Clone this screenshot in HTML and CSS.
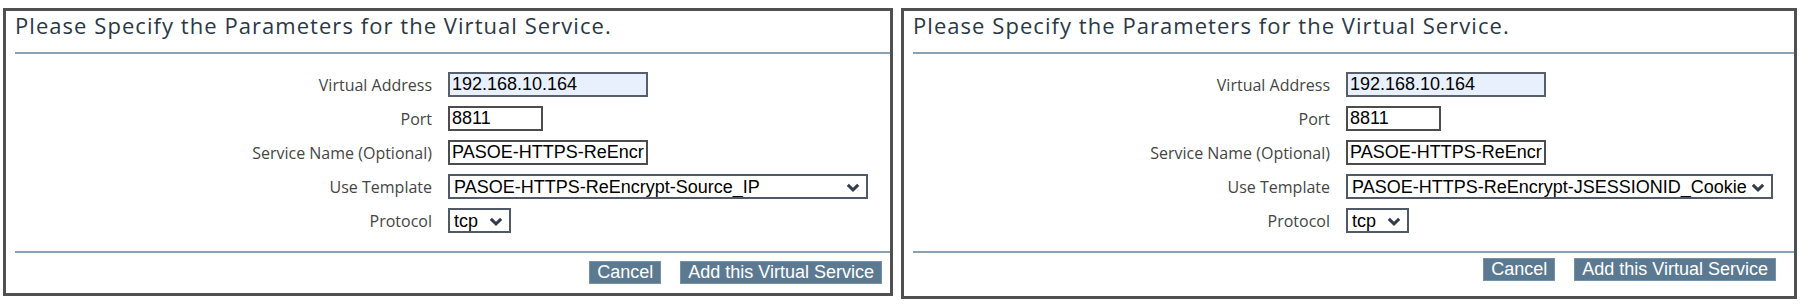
FILE: index.html
```html
<!DOCTYPE html>
<html lang="en">
<head>
    <meta charset="UTF-8">
    <meta name="viewport" content="width=device-width, initial-scale=1.0">
    <title>Add Virtual Service</title>
    <link rel="stylesheet" href="styles.css">
</head>
<body>
    <div class="screens">

        <!-- Screen 1: Source IP template -->
        <section class="panel">
            <h2 class="panel-title">Please Specify the Parameters for the Virtual Service.</h2>
            <form class="vs-form">
                <div class="field-grid">
                    <label for="va-1">Virtual Address</label>
                    <div><input type="text" id="va-1" class="field address autofilled" value="192.168.10.164"></div>

                    <label for="port-1">Port</label>
                    <div><input type="text" id="port-1" class="field port" value="8811"></div>

                    <label for="name-1">Service Name (Optional)</label>
                    <div><input type="text" id="name-1" class="field address" value="PASOE-HTTPS-ReEncrypt"></div>

                    <label for="tpl-1">Use Template</label>
                    <div class="select-box template">
                        <select id="tpl-1">
                            <option>PASOE-HTTPS-ReEncrypt-Source_IP</option>
                            <option>PASOE-HTTPS-ReEncrypt-JSESSIONID_Cookie</option>
                        </select>
                        <svg width="14" height="9" viewBox="0 0 14 9"><polyline points="1.8,1.8 7,6.8 12.2,1.8" fill="none" stroke="currentColor" stroke-width="3"/></svg>
                    </div>

                    <label for="proto-1">Protocol</label>
                    <div class="select-box protocol">
                        <select id="proto-1">
                            <option>tcp</option>
                            <option>udp</option>
                        </select>
                        <svg width="14" height="9" viewBox="0 0 14 9"><polyline points="1.8,1.8 7,6.8 12.2,1.8" fill="none" stroke="currentColor" stroke-width="3"/></svg>
                    </div>
                </div>

                <div class="panel-actions">
                    <button type="button">Cancel</button>
                    <button type="submit">Add this Virtual Service</button>
                </div>
            </form>
        </section>

        <!-- Screen 2: JSESSIONID cookie template -->
        <section class="panel panel-wide">
            <h2 class="panel-title">Please Specify the Parameters for the Virtual Service.</h2>
            <form class="vs-form">
                <div class="field-grid">
                    <label for="va-2">Virtual Address</label>
                    <div><input type="text" id="va-2" class="field address autofilled" value="192.168.10.164"></div>

                    <label for="port-2">Port</label>
                    <div><input type="text" id="port-2" class="field port" value="8811"></div>

                    <label for="name-2">Service Name (Optional)</label>
                    <div><input type="text" id="name-2" class="field address" value="PASOE-HTTPS-ReEncrypt"></div>

                    <label for="tpl-2">Use Template</label>
                    <div class="select-box template template-long">
                        <select id="tpl-2">
                            <option>PASOE-HTTPS-ReEncrypt-JSESSIONID_Cookie</option>
                            <option>PASOE-HTTPS-ReEncrypt-Source_IP</option>
                        </select>
                        <svg width="14" height="9" viewBox="0 0 14 9"><polyline points="1.8,1.8 7,6.8 12.2,1.8" fill="none" stroke="currentColor" stroke-width="3"/></svg>
                    </div>

                    <label for="proto-2">Protocol</label>
                    <div class="select-box protocol">
                        <select id="proto-2">
                            <option>tcp</option>
                            <option>udp</option>
                        </select>
                        <svg width="14" height="9" viewBox="0 0 14 9"><polyline points="1.8,1.8 7,6.8 12.2,1.8" fill="none" stroke="currentColor" stroke-width="3"/></svg>
                    </div>
                </div>

                <div class="panel-actions">
                    <button type="button">Cancel</button>
                    <button type="submit">Add this Virtual Service</button>
                </div>
            </form>
        </section>

    </div>
</body>
</html>
```

FILE: styles.css
```css
/* Two captured "Add Virtual Service" dialogs side by side */
body {
    margin: 0;
    background-color: #ffffff;
    font-family: "Open Sans", "Noto Sans", sans-serif;
    color: #3a3a3a;
}

.screens {
    display: flex;
    align-items: flex-start;
    gap: 8px;
    padding: 8px 0 0 3px;
}

.panel {
    width: 890px;
    box-sizing: border-box;
    border: 3px solid #505050;
    background-color: #ffffff;
}

.panel-wide {
    width: 896px;
}

.panel-title {
    margin: 0 0 0 9px;
    padding: 0 0 13px 0;
    font-size: 22px;
    font-weight: normal;
    letter-spacing: 1.05px;
    line-height: 28px;
    color: #2a3846;
    border-bottom: 2px solid #87a1b5;
}

.vs-form {
    margin: 0;
}

.field-grid {
    display: grid;
    grid-template-columns: 426px auto;
    column-gap: 16px;
    row-gap: 9px;
    align-items: center;
    padding: 18px 0 18px 0;
}

.field-grid label {
    text-align: right;
    font-size: 16px;
    color: #454545;
}

.field-grid > div {
    display: flex;
}

.field {
    box-sizing: border-box;
    height: 25px;
    padding: 0 2px;
    font-family: "Liberation Sans", Arial, sans-serif;
    font-size: 18px;
    color: #000000;
    border: 2px solid #4c4c4c;
    background-color: #ffffff;
    outline: none;
}

.field.address {
    width: 200px;
}

.field.port {
    width: 95px;
}

.field.autofilled {
    background-color: #e8f0fe;
    border-color: #55606b;
}

.select-box {
    position: relative;
    box-sizing: border-box;
    height: 25px;
    border: 2px solid #4f5a66;
    background-color: #ffffff;
    color: #333e4a;
}

.select-box select {
    appearance: none;
    -webkit-appearance: none;
    width: 100%;
    height: 100%;
    margin: 0;
    padding: 0 24px 0 4px;
    border: none;
    background: transparent;
    font-family: "Liberation Sans", Arial, sans-serif;
    font-size: 18px;
    color: #000000;
    outline: none;
}

.select-box svg {
    position: absolute;
    right: 6px;
    top: 7px;
    pointer-events: none;
}

.template {
    width: 420px;
}

.template-long {
    width: 427px;
}

.protocol {
    width: 63px;
}

.panel-actions {
    display: flex;
    justify-content: flex-end;
    gap: 19px;
    margin-left: 9px;
    padding: 8px 8px 9px 0;
    border-top: 2px solid #87a1b5;
}

.panel-wide .panel-actions {
    padding: 5px 18px 15px 0;
}

.panel-actions button {
    height: 23px;
    padding: 0 7px;
    font-family: "Liberation Sans", Arial, sans-serif;
    font-size: 18px;
    line-height: 21px;
    color: #ffffff;
    background-color: #5b7a92;
    border: 1px solid #7592a8;
    border-radius: 0;
    cursor: pointer;
}

.panel-actions button:hover {
    background-color: #4b687f;
}
```
